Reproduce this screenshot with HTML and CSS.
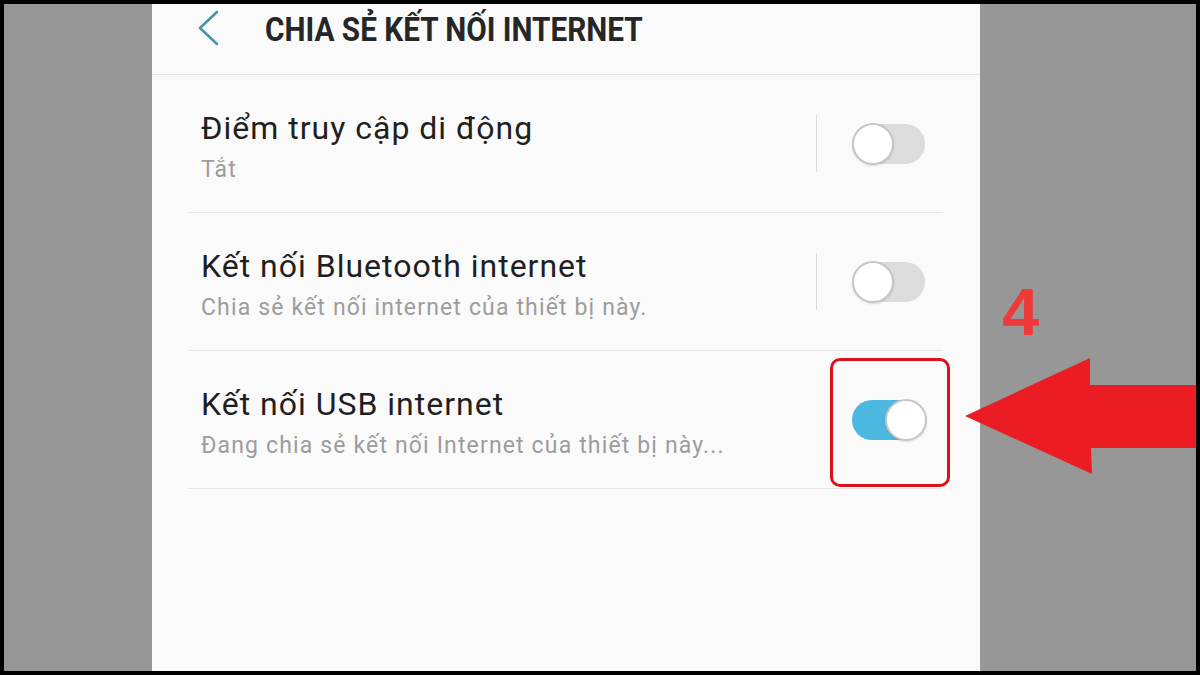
FILE: index.html
```html
<!DOCTYPE html>
<html lang="vi">
<head>
<meta charset="utf-8">
<title>Chia sẻ kết nối internet</title>
<link rel="stylesheet" href="styles.css">
</head>
<body>
<div class="frame">
  <div class="spacer"></div>
  <div class="panel">
    <div class="header">
      <svg class="back" width="24" height="40" viewBox="0 0 24 40">
        <polyline points="19,3 2,19 19,35" fill="none" stroke="#4a93a8" stroke-width="2.6" stroke-linecap="round" stroke-linejoin="round"/>
      </svg>
      <div class="title"><span>CHIA SẺ KẾT NỐI INTERNET</span></div>
    </div>
    <div class="list">
      <div class="row">
        <div class="text">
          <div class="main">Điểm truy cập di động</div>
          <div class="sub">Tắt</div>
        </div>
        <div class="ctrl">
          <div class="sep"></div>
          <div class="switch"><div class="thumb"></div></div>
        </div>
      </div>
      <div class="row">
        <div class="text">
          <div class="main">Kết nối Bluetooth internet</div>
          <div class="sub">Chia sẻ kết nối internet của thiết bị này.</div>
        </div>
        <div class="ctrl">
          <div class="sep"></div>
          <div class="switch"><div class="thumb"></div></div>
        </div>
      </div>
      <div class="row">
        <div class="text">
          <div class="main">Kết nối USB internet</div>
          <div class="sub">Đang chia sẻ kết nối Internet của thiết bị này...</div>
        </div>
        <div class="ctrl">
          <div class="switch on"><div class="thumb"></div><div class="highlight"></div></div>
        </div>
      </div>
    </div>
  </div>
  <div class="spacer"></div>
  <div class="step">4</div>
  <svg class="arrow" width="231" height="117" viewBox="0 0 231 117">
    <polygon points="0,58 125,0 125,27 231,27 231,90 126,90 127,116" fill="#ec1c24"/>
  </svg>
</div>
</body>
</html>
```

FILE: styles.css
```css
* { box-sizing: border-box; }
html, body { margin: 0; padding: 0; }
body {
  background: #000;
  width: 1200px;
  height: 675px;
  overflow: hidden;
  font-family: Roboto, "Liberation Sans", sans-serif;
}
.frame {
  position: relative;
  margin: 4px;
  width: 1192px;
  height: 667px;
  background: #979797;
  display: grid;
  grid-template-columns: 148px 828px 1fr;
}
.panel {
  background: #fafafa;
  height: 667px;
  display: flex;
  flex-direction: column;
}
.header {
  height: 71px;
  border-bottom: 1px solid #e4e4e4;
  display: flex;
  align-items: flex-start;
  padding: 5px 0 0 46px;
}
.back { flex: none; display: block; }
.title {
  margin-left: 43px;
  font-size: 34px;
  line-height: 40px;
  font-weight: 700;
  color: #262626;
  white-space: nowrap;
}
.title span {
  display: inline-block;
  transform: scaleX(0.875);
  transform-origin: left center;
}
.list {
  margin: 0 37px 0 36px;
}
.row {
  height: 138px;
  border-bottom: 1px solid #e6e6e6;
  display: flex;
  align-items: center;
  padding-left: 13px;
}
.text {
  align-self: flex-start;
  padding-top: 34px;
  flex: 1;
  white-space: nowrap;
}
.main {
  font-size: 32px;
  line-height: 38px;
  letter-spacing: 1px;
  color: #1f1f1f;
}
.sub {
  margin-top: 9px;
  font-size: 23px;
  line-height: 28px;
  letter-spacing: 1.15px;
  color: #9d9d9d;
}
.ctrl {
  display: flex;
  align-items: center;
  padding-right: 18px;
}
.sep {
  width: 1px;
  height: 57px;
  background: #dadada;
  margin-right: 35px;
}
.switch {
  position: relative;
  width: 73px;
  height: 40px;
  border-radius: 20px;
  background: #dcdcdc;
}
.thumb {
  position: absolute;
  left: 0;
  top: -1px;
  width: 42px;
  height: 42px;
  border-radius: 50%;
  background: #fff;
  border: 2px solid #c6c6c6;
  box-shadow: 0 1px 2px rgba(0,0,0,0.12);
}
.switch.on { background: #4bb8e2; }
.switch.on .thumb { left: auto; right: -2px; }
.highlight {
  position: absolute;
  left: -22px;
  right: -25px;
  top: -42px;
  bottom: -47px;
  border: 3px solid #d9121c;
  border-radius: 10px;
}
.step {
  position: absolute;
  left: 998px;
  top: 274px;
  font-family: "Liberation Sans", Arial, sans-serif;
  font-weight: 700;
  font-size: 67px;
  line-height: 67px;
  color: #f03a3a;
}
.arrow {
  position: absolute;
  left: 961px;
  top: 354px;
  display: block;
}
```
